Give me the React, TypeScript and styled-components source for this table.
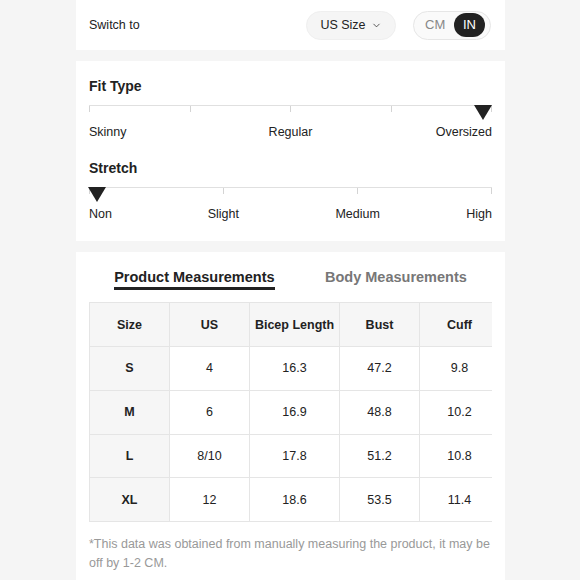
import React from "react";
import styled, { createGlobalStyle } from "styled-components";
import { ChevronDown } from "lucide-react";

const Global = createGlobalStyle`
  html, body { margin: 0; padding: 0; background: #f5f5f5; }
  body { font-family: "Liberation Sans", Arial, sans-serif; color: #222; }
`;

const Page = styled.div`
  width: 429px;
  margin-left: 76px;
  display: flex;
  flex-direction: column;
  gap: 11px;
`;

const Panel = styled.section<{ $pad?: string }>`
  background: #fff;
  padding: ${(p) => p.$pad || "0 13px"};
`;

const TopBar = styled.div`
  height: 50px;
  display: flex;
  align-items: center;
`;

const SwitchLabel = styled.span`
  font-size: 12.5px;
  flex: 1;
`;

const SizePill = styled.div`
  height: 29px;
  width: 90px;
  box-sizing: border-box;
  border-radius: 15px;
  background: #f5f5f5;
  border: 1px solid #efefef;
  display: flex;
  align-items: center;
  justify-content: center;
  gap: 5px;
  font-size: 12.5px;
  color: #222;
  margin-right: 17px;
`;

const UnitToggle = styled.div`
  height: 29px;
  width: 78px;
  box-sizing: border-box;
  border-radius: 15px;
  background: #fafafa;
  border: 1px solid #e6e6e6;
  display: flex;
  align-items: center;
  padding: 0 5px 0 11px;
  justify-content: space-between;
  margin-right: 1px;
`;

const Unit = styled.span<{ $active?: boolean }>`
  font-size: 13px;
  height: 24px;
  line-height: 24px;
  border-radius: 12px;
  padding: ${(p) => (p.$active ? "0 9px" : "0")};
  color: ${(p) => (p.$active ? "#fff" : "#888")};
  background: ${(p) => (p.$active ? "#222" : "transparent")};
`;

const Heading = styled.h3<{ $top?: number }>`
  margin: ${(p) => p.$top ?? 0}px 0 9px;
  font-size: 14px;
  line-height: 20px;
  font-weight: 700;
  color: #222;
`;

const Track = styled.div`
  position: relative;
  height: 17px;
  border-top: 1px solid #e0e0e0;
  display: flex;
  justify-content: space-between;
  align-items: flex-start;
`;

const Tick = styled.span`
  width: 1px;
  height: 6px;
  background: #d4d4d4;
`;

const Marker = styled.svg<{ $end?: boolean }>`
  position: absolute;
  top: -1px;
  ${(p) => (p.$end ? "right: 0;" : "left: -1px;")}
`;

const Labels = styled.div<{ $cols: number }>`
  display: grid;
  grid-template-columns: repeat(${(p) => p.$cols}, 1fr);
  font-size: 12.5px;
  line-height: 18px;
  color: #222;
`;

const Label = styled.span<{ $align: string; $start: number; $span: number }>`
  grid-column: ${(p) => p.$start} / span ${(p) => p.$span};
  text-align: ${(p) => p.$align};
  white-space: nowrap;
`;

function Scale({
  ticks,
  labels,
  markerEnd,
}: {
  ticks: number;
  labels: string[];
  markerEnd?: boolean;
}) {
  const n = labels.length;
  const cols = 2 * (n - 1);
  return (
    <div>
      <Track>
        {Array.from({ length: ticks }).map((_, i) => (
          <Tick key={i} />
        ))}
        <Marker $end={markerEnd} width="18" height="15" viewBox="0 0 18 15">
          <polygon points="0,0 18,0 9,15" fill="#222" />
        </Marker>
      </Track>
      <Labels $cols={cols}>
        {labels.map((l, i) => {
          if (i === 0) return <Label key={l} $align="left" $start={1} $span={1}>{l}</Label>;
          if (i === n - 1) return <Label key={l} $align="right" $start={cols} $span={1}>{l}</Label>;
          return <Label key={l} $align="center" $start={2 * i} $span={2}>{l}</Label>;
        })}
      </Labels>
    </div>
  );
}

const Tabs = styled.div`
  display: flex;
  justify-content: space-around;
  align-items: flex-start;
`;

const Tab = styled.div<{ $active?: boolean }>`
  font-size: 14.5px;
  line-height: 20px;
  font-weight: 700;
  color: ${(p) => (p.$active ? "#222" : "#777")};
  border-bottom: 3px solid ${(p) => (p.$active ? "#222" : "transparent")};
`;

const TableWrap = styled.div`
  margin-top: 12px;
  overflow: hidden;
  width: 100%;
`;

const Table = styled.table`
  border-collapse: collapse;
  table-layout: fixed;
  width: 410px;
  font-size: 12.5px;
  color: #222;
`;

const Th = styled.th`
  height: 43px;
  padding: 0;
  background: #f6f6f6;
  border: 1px solid #e5e5e5;
  font-weight: 700;
  text-align: center;
`;

const Td = styled.td<{ $head?: boolean }>`
  height: 42.8px;
  padding: 0;
  border: 1px solid #e5e5e5;
  text-align: center;
  background: ${(p) => (p.$head ? "#f6f6f6" : "#fff")};
  font-weight: ${(p) => (p.$head ? 700 : 400)};
`;

const Note = styled.p`
  margin: 13px 0 0;
  font-size: 12.5px;
  line-height: 18.5px;
  color: #999;
  padding-bottom: 20px;
`;

const cols = [80, 80, 90, 80, 80];
const header = ["Size", "US", "Bicep Length", "Bust", "Cuff"];
const rows = [
  ["S", "4", "16.3", "47.2", "9.8"],
  ["M", "6", "16.9", "48.8", "10.2"],
  ["L", "8/10", "17.8", "51.2", "10.8"],
  ["XL", "12", "18.6", "53.5", "11.4"],
];

export default function App() {
  return (
    <>
      <Global />
      <Page>
        <Panel>
          <TopBar>
            <SwitchLabel>Switch to</SwitchLabel>
            <SizePill>
              US Size <ChevronDown size={11} strokeWidth={1.6} />
            </SizePill>
            <UnitToggle>
              <Unit>CM</Unit>
              <Unit $active>IN</Unit>
            </UnitToggle>
          </TopBar>
        </Panel>
        <Panel $pad="15px 13px 18px">
          <Heading>Fit Type</Heading>
          <Scale ticks={5} labels={["Skinny", "Regular", "Oversized"]} markerEnd />
          <Heading $top={17}>Stretch</Heading>
          <Scale ticks={4} labels={["Non", "Slight", "Medium", "High"]} />
        </Panel>
        <Panel $pad="15px 13px 0">
          <Tabs>
            <Tab $active>Product Measurements</Tab>
            <Tab>Body Measurements</Tab>
          </Tabs>
          <TableWrap>
            <Table>
              <colgroup>
                {cols.map((w, i) => (
                  <col key={i} style={{ width: w }} />
                ))}
              </colgroup>
              <thead>
                <tr>
                  {header.map((h) => (
                    <Th key={h}>{h}</Th>
                  ))}
                </tr>
              </thead>
              <tbody>
                {rows.map((r) => (
                  <tr key={r[0]}>
                    {r.map((c, i) => (
                      <Td key={i} $head={i === 0}>
                        {c}
                      </Td>
                    ))}
                  </tr>
                ))}
              </tbody>
            </Table>
          </TableWrap>
          <Note>
            *This data was obtained from manually measuring the product, it may be off by 1-2 CM.
          </Note>
        </Panel>
      </Page>
    </>
  );
}
